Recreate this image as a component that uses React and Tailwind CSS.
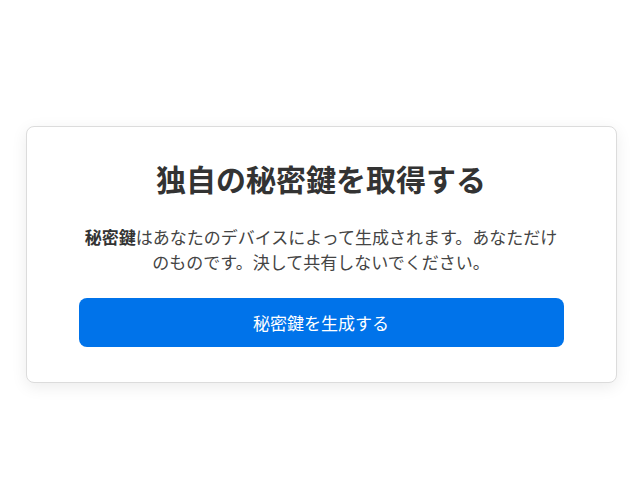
export default function App() {
  return (
    <div
      className="w-[640px] h-[480px] bg-white flex items-start justify-center pt-[126px] pl-[2px]"
      style={{ fontFamily: '"Noto Sans CJK JP", "Noto Sans", sans-serif' }}
    >
      <div className="w-[591px] h-[257px] rounded-lg border border-[#dcdcdc] bg-white shadow-[0_4px_16px_rgba(0,0,0,0.08)] px-[52px] pt-[33px] flex flex-col items-center">
        <h1 className="text-[30px] leading-[36px] font-bold text-[#333333] text-center">
          独自の秘密鍵を取得する
        </h1>
        <p className="mt-[28px] text-[17px] leading-[25px] text-[#444444] text-center">
          <strong className="font-bold text-[#333333]">秘密鍵</strong>
          はあなたのデバイスによって生成されます。あなただけのものです。決して共有しないでください。
        </p>
        <button className="mt-[24px] w-full h-[49px] rounded-lg bg-[#0073ea] text-white text-[17px] flex items-center justify-center">
          秘密鍵を生成する
        </button>
      </div>
    </div>
  );
}
